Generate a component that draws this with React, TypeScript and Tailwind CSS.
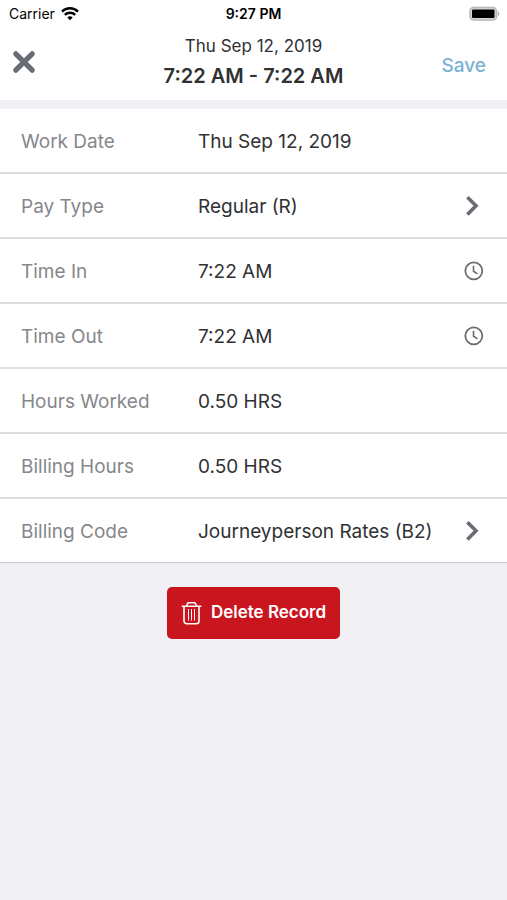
type Field = {
  label: string;
  value: string;
  icon?: "chevron" | "clock";
};

const fields: Field[] = [
  { label: "Work Date", value: "Thu Sep 12, 2019" },
  { label: "Pay Type", value: "Regular (R)", icon: "chevron" },
  { label: "Time In", value: "7:22 AM", icon: "clock" },
  { label: "Time Out", value: "7:22 AM", icon: "clock" },
  { label: "Hours Worked", value: "0.50 HRS" },
  { label: "Billing Hours", value: "0.50 HRS" },
  { label: "Billing Code", value: "Journeyperson Rates (B2)", icon: "chevron" },
];

function WifiIcon() {
  return (
    <svg width="18" height="14" viewBox="0 0 18 14" fill="none" stroke="#000" strokeWidth="2.4">
      <path d="M1 4.6a11.4 11.4 0 0 1 16 0" />
      <path d="M3.8 7.900a7.4 7.4 0 0 1 10.4 0" />
      <path d="M6.3 10.5a3.9 3.9 0 0 1 5.4 0L9 13.2z" fill="#000" stroke="none" />
    </svg>
  );
}

function BatteryIcon() {
  return (
    <svg width="32" height="16" viewBox="0 0 32 16">
      <rect x="2" y="1.5" width="26.5" height="12.5" rx="3.5" fill="#d8d8d8" stroke="#b8b8b8" strokeWidth="1.5" />
      <rect x="4" y="3.5" width="22.5" height="8.5" rx="1" fill="#000" />
      <path d="M29.8 5.5c2 .6 2 4 0 4.6z" fill="#a8a8a8" />
    </svg>
  );
}

function CloseIcon() {
  return (
    <svg width="24" height="24" viewBox="0 0 24 24" stroke="#696b75" strokeWidth="5.2" strokeLinecap="round">
      <path d="M3.8 3.8l16.4 16.4M20.2 3.8l-16.4 16.4" />
    </svg>
  );
}

function ChevronIcon() {
  return (
    <svg width="22" height="22" viewBox="0 0 22 22" fill="none" stroke="#696b75" strokeWidth="3.6">
      <path d="M4.4 2.2l8.6 8.6-8.6 8.6" />
    </svg>
  );
}

function ClockIcon() {
  return (
    <svg width="22" height="22" viewBox="0 0 22 22" fill="none" stroke="#6c6c70" strokeWidth="1.8">
      <circle cx="10.8" cy="10.8" r="8.5" />
      <path d="M10.5 5.8v5.4l4 2.6" strokeWidth="1.6" />
    </svg>
  );
}

function TrashIcon() {
  return (
    <svg width="22" height="24" viewBox="0 0 22 24" fill="none" stroke="#fff" strokeWidth="1.6">
      <path d="M1.3 5.3h18.4" strokeLinecap="round" />
      <path d="M5.4 5l1-2.300a1.5 1.5 0 0 1 1.4-.9h5.400a1.5 1.500 0 0 1 1.400.9l1 2.300" />
      <path d="M3 5.500v14.500a2.700 2.700 0 0 0 2.700 2.700h9.600a2.700 2.700 0 0 0 2.700-2.700V5.500" />
      <path d="M7.500 8v11.500M10.500 8v11.500M13.500 8v11.500" strokeWidth="1" />
    </svg>
  );
}

function FieldRow({ label, value, icon }: Field) {
  const content = (
    <>
      <span className="w-[177px] shrink-0 pt-[3px] text-[#86878b]">{label}</span>
      <span className="flex-1 pt-[3px] text-[#303133]">{value}</span>
      {icon === "chevron" && <ChevronIcon />}
      {icon === "clock" && <ClockIcon />}
    </>
  );
  const row =
    "flex h-[65px] w-full items-center border-b-2 border-[#dedee0] pr-[22px] pl-[21px] text-left text-[19px] last:h-16 last:border-b last:border-[#c8c9cc]";

  if (icon) {
    return (
      <button type="button" className={row}>
        {content}
      </button>
    );
  }
  return <div className={row}>{content}</div>;
}

export default function App() {
  return (
    <div className="min-h-screen bg-[#f0f0f5] font-['Inter',sans-serif]">
      <header className="bg-white">
        {/* status bar */}
        <div className="grid h-7 grid-cols-3 items-center px-[7px] text-sm text-black">
          <div className="flex items-center gap-[6px] pl-[2px]">
            Carrier
            <WifiIcon />
          </div>
          <div className="text-center font-semibold">9:27 PM</div>
          <div className="flex justify-end">
            <BatteryIcon />
          </div>
        </div>

        {/* title bar */}
        <div className="grid h-[72px] grid-cols-[1fr_auto_1fr] items-center">
          <button type="button" aria-label="Close" className="flex justify-self-start pb-1 pl-3">
            <CloseIcon />
          </button>
          <div className="pb-1 text-center text-[#303133]">
            <div className="text-[17px] leading-7">Thu Sep 12, 2019</div>
            <h1 className="text-xl leading-8 font-semibold">7:22 AM - 7:22 AM</h1>
          </div>
          <button
            type="button"
            className="justify-self-end pt-1 pr-[21px] text-[19px] font-medium text-[#7bb2d3]"
          >
            Save
          </button>
        </div>
      </header>

      <main className="pt-[9px]">
        <div className="bg-white">
          {fields.map((field) => (
            <FieldRow key={field.label} {...field} />
          ))}
        </div>

        <div className="flex justify-center pt-6">
          <button
            type="button"
            className="flex h-[52px] items-center gap-2 rounded-[5px] bg-[#c9151e] px-[14px] text-[17px] font-semibold text-white"
          >
            <TrashIcon />
            Delete Record
          </button>
        </div>
      </main>
    </div>
  );
}
